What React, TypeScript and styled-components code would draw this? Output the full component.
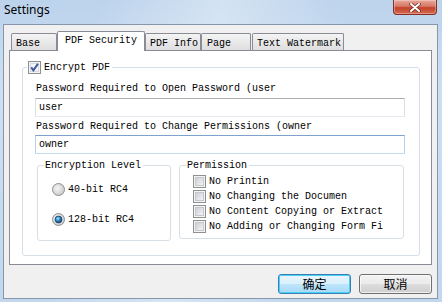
import styled, { createGlobalStyle } from "styled-components";

const MONO = `"Liberation Mono", "DejaVu Sans Mono", monospace`;

const GlobalStyle = createGlobalStyle`
  html, body {
    margin: 0;
    padding: 0;
    background: #c6daf0;
  }
  body {
    width: 442px;
    height: 302px;
    overflow: hidden;
  }
`;

const CheckBox = ({ checked = false }: { checked?: boolean }) => (
  <svg width="13" height="13" viewBox="0 0 13 13" style={{ flexShrink: 0 }}>
    <defs>
      <linearGradient id="cbFill" x1="0" y1="0" x2="1" y2="1">
        <stop offset="0" stopColor="#c9cdd3" />
        <stop offset="1" stopColor="#f6f6f6" />
      </linearGradient>
    </defs>
    <rect x="0.5" y="0.5" width="12" height="12" fill="#f4f4f4" stroke="#8e8f8f" />
    <rect
      x="2.5"
      y="2.5"
      width="8"
      height="8"
      fill={checked ? "#f2f4f7" : "url(#cbFill)"}
      stroke={checked ? "#d6dae0" : "#c4c7cc"}
    />
    {checked && (
      <path d="M3.2 6.4 L5.4 9.4 L10 2.8" stroke="#3a5596" strokeWidth="1.9" fill="none" />
    )}
  </svg>
);

const Radio = ({ checked = false }: { checked?: boolean }) => (
  <svg width="13" height="13" viewBox="0 0 13 13" style={{ flexShrink: 0 }}>
    <defs>
      <radialGradient id="rdFill" cx="0.4" cy="0.4" r="0.7">
        <stop offset="0" stopColor="#f6f6f6" />
        <stop offset="1" stopColor="#c4c4c4" />
      </radialGradient>
      <radialGradient id="rdDot" cx="0.4" cy="0.35" r="0.7">
        <stop offset="0" stopColor="#a8e0ff" />
        <stop offset="0.5" stopColor="#2a86c8" />
        <stop offset="1" stopColor="#0b3d70" />
      </radialGradient>
    </defs>
    <circle cx="6.5" cy="6.5" r="6" fill="url(#rdFill)" stroke="#8e8f8f" />
    {checked && <circle cx="6.5" cy="6.5" r="3.4" fill="url(#rdDot)" stroke="#163f66" strokeWidth="0.8" />}
  </svg>
);

const tabs = [
  { label: "Base", w: 46, pad: 4 },
  { label: "PDF Security", w: 88, pad: 7, active: true },
  { label: "PDF Info", w: 56, pad: 4 },
  { label: "Page", w: 50, pad: 5 },
  { label: "Text Watermark", w: 92, pad: 4, gap: 1 },
];

// texts as the dialog shows them (the original control cuts them short)
const permissions = [
  "No Printin",
  "No Changing the Documen",
  "No Content Copying or Extract",
  "No Adding or Changing Form Fi",
];

export default function App() {
  return (
    <>
      <GlobalStyle />
      <Window>
        <TitleBar>
          <Title>Settings</Title>
          <CloseButton>
            <svg width="12" height="9" viewBox="0 0 12 9">
              <path d="M2 1 L10 8 M10 1 L2 8" stroke="#6b2a20" strokeWidth="3.4" strokeLinecap="round" />
              <path d="M2 1 L10 8 M10 1 L2 8" stroke="#ffffff" strokeWidth="2" strokeLinecap="round" />
            </svg>
          </CloseButton>
        </TitleBar>

        <Client>
          <TabStrip>
            {tabs.map((t) => (
              <Tab key={t.label} $w={t.w} $pad={t.pad} $active={t.active} $gap={t.gap ?? 0}>
                {t.label}
              </Tab>
            ))}
          </TabStrip>

          <Panel>
            <GroupBox>
              <Legend>
                <CheckBox checked />
                <span>Encrypt PDF</span>
              </Legend>

              <FieldLabel $top={9}>Password Required to Open Password (user</FieldLabel>
              <TextBox readOnly value="user" $top={3} />
              <FieldLabel $top={4}>Password Required to Change Permissions (owner</FieldLabel>
              <TextBox readOnly value="owner" $top={2} $hover />

              <GroupRow>
                <SubGroup $w={134} $padLeft={14} $padBottom={14}>
                  <Legend>Encryption Level</Legend>
                  <ChoiceRow $top={11}>
                    <Radio />
                    <span>40-bit RC4</span>
                  </ChoiceRow>
                  <ChoiceRow $top={17}>
                    <Radio checked />
                    <span>128-bit RC4</span>
                  </ChoiceRow>
                </SubGroup>

                <SubGroup $w={225} $padLeft={13} $padBottom={5}>
                  <Legend $shift={-7}>Permission</Legend>
                  {permissions.map((p, i) => (
                    <ChoiceRow key={p} $top={i === 0 ? 3 : 2}>
                      <CheckBox />
                      <span>{p}</span>
                    </ChoiceRow>
                  ))}
                </SubGroup>
              </GroupRow>
            </GroupBox>
          </Panel>

          <Footer>
            <DialogButton $default>确定</DialogButton>
            <DialogButton>取消</DialogButton>
          </Footer>
        </Client>
      </Window>
    </>
  );
}

// Styled Components
const Window = styled.div`
  width: 442px;
  height: 302px;
  box-sizing: border-box;
  display: flex;
  flex-direction: column;
  padding: 0 4px 3px 3px;
  background:
    linear-gradient(100deg, rgba(255, 255, 255, 0) 20%, rgba(255, 255, 255, 0.35) 45%, rgba(255, 255, 255, 0) 70%),
    linear-gradient(180deg, #bcd3ec 0%, #cddff3 30%, #c2d7ee 100%);
`;

const TitleBar = styled.div`
  height: 24px;
  flex-shrink: 0;
  display: flex;
  justify-content: space-between;
  align-items: flex-start;
`;

const Title = styled.span`
  margin: 2px 0 0 1px;
  font-family: "Noto Sans", "Open Sans", sans-serif;
  font-size: 12px;
  line-height: 16px;
  color: #000;
`;

const CloseButton = styled.div`
  width: 44px;
  height: 15px;
  margin-right: 1px;
  box-sizing: border-box;
  display: flex;
  align-items: center;
  justify-content: center;
  border: 1px solid #833126;
  border-top: none;
  border-radius: 0 0 4px 4px;
  background: linear-gradient(180deg, #e9a899 0%, #d77866 45%, #c2412b 55%, #d56a52 100%);
  box-shadow: inset 0 0 0 1px rgba(255, 255, 255, 0.3);
`;

const Client = styled.div`
  flex: 1;
  box-sizing: border-box;
  display: flex;
  flex-direction: column;
  padding: 6px 5px 0 5px;
  background: #f0f0f0;
  border: 1px solid #8797ab;
`;

const TabStrip = styled.div`
  height: 19px;
  display: flex;
  align-items: flex-end;
  padding-left: 2px;
  position: relative;
  z-index: 1;
`;

const Tab = styled.div<{ $w: number; $pad: number; $active?: boolean; $gap: number }>`
  box-sizing: border-box;
  width: ${(p) => p.$w}px;
  height: ${(p) => (p.$active ? 20 : 17)}px;
  margin-left: ${(p) => p.$gap}px;
  margin-bottom: ${(p) => (p.$active ? -1 : 0)}px;
  padding: ${(p) => (p.$active ? 3 : 4)}px 0 0 ${(p) => p.$pad}px;
  border: 1px solid #898c95;
  border-bottom: none;
  border-radius: 2px 2px 0 0;
  background: ${(p) => (p.$active ? "#ffffff" : "linear-gradient(180deg, #f4f4f4 0%, #e9e9e9 50%, #dedede 100%)")};
  font-family: ${MONO};
  font-size: 10px;
  line-height: 12px;
  color: #000;
  white-space: nowrap;
`;

const Panel = styled.div`
  background: #ffffff;
  border: 1px solid #898c95;
  padding: 16px 11px 8px 12px;
`;

const GroupBox = styled.div`
  display: flex;
  flex-direction: column;
  border: 1px solid #d5dfe5;
  border-radius: 3px;
  padding: 0 14px 14px 12px;
`;

const Legend = styled.div<{ $shift?: number }>`
  align-self: flex-start;
  display: flex;
  align-items: center;
  gap: 3px;
  height: 13px;
  margin: -7px 0 0 ${(p) => p.$shift ?? -8}px;
  padding: 0 2px 0 1px;
  background: #ffffff;
  font-family: ${MONO};
  font-size: 10px;
  line-height: 13px;
  color: #000;
  white-space: nowrap;
`;

const FieldLabel = styled.div<{ $top: number }>`
  margin-top: ${(p) => p.$top}px;
  padding-left: 1px;
  font-family: ${MONO};
  font-size: 10px;
  line-height: 12px;
  color: #000;
  white-space: nowrap;
`;

const TextBox = styled.input<{ $top: number; $hover?: boolean }>`
  display: block;
  box-sizing: border-box;
  width: 100%;
  height: 19px;
  margin: ${(p) => p.$top}px 0 0 0;
  padding: 0 3px;
  border: 1px solid;
  border-color: ${(p) =>
    p.$hover ? "#7da2ce #b7d2ea #c3dcf0 #b7d2ea" : "#abadb3 #dbdfe6 #e3e9ef #dbdfe6"};
  background: #ffffff;
  font-family: ${MONO};
  font-size: 10px;
  color: #000;
  outline: none;
`;

const GroupRow = styled.div`
  display: flex;
  align-items: flex-start;
  gap: 8px;
  margin: 11px 0 0 2px;
`;

const SubGroup = styled.div<{ $w: number; $padLeft: number; $padBottom: number }>`
  box-sizing: border-box;
  width: ${(p) => p.$w}px;
  display: flex;
  flex-direction: column;
  border: 1px solid #d5dfe5;
  border-radius: 3px;
  padding: 0 4px ${(p) => p.$padBottom}px ${(p) => p.$padLeft}px;
`;

const ChoiceRow = styled.div<{ $top: number }>`
  display: flex;
  align-items: center;
  gap: 3px;
  height: 13px;
  margin-top: ${(p) => p.$top}px;
  font-family: ${MONO};
  font-size: 10px;
  line-height: 13px;
  color: #000;
  white-space: nowrap;
`;

const Footer = styled.div`
  display: flex;
  justify-content: flex-end;
  gap: 8px;
  padding-top: 9px;
`;

const DialogButton = styled.button<{ $default?: boolean }>`
  width: 73px;
  height: 20px;
  padding: 0;
  border-radius: 3px;
  border: 1px solid ${(p) => (p.$default ? "#3c7fb1" : "#707070")};
  background: ${(p) =>
    p.$default
      ? "linear-gradient(180deg, #eaf6fd 0%, #d9f0fc 50%, #bee6fd 50%, #a7d9f5 100%)"
      : "linear-gradient(180deg, #f2f2f2 0%, #ebebeb 50%, #dddddd 50%, #cfcfcf 100%)"};
  box-shadow: inset 0 0 0 1px ${(p) => (p.$default ? "#48d0f8" : "rgba(255, 255, 255, 0.7)")};
  font-family: "Noto Sans CJK SC", "Noto Sans", sans-serif;
  font-size: 12px;
  line-height: 18px;
  color: #000;
`;
